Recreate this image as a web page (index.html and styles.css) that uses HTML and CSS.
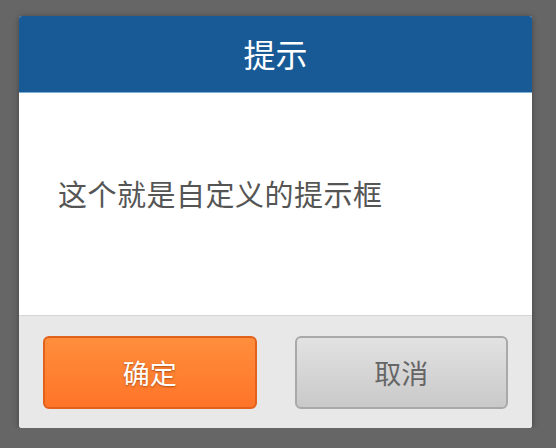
FILE: index.html
```html
<!DOCTYPE html>
<html lang="zh-CN">
<head>
  <meta charset="UTF-8">
  <meta name="viewport" content="width=device-width, initial-scale=1.0">
  <title>提示</title>
  <link rel="stylesheet" href="styles.css">
</head>
<body>
  <div class="dialog">
    <div class="dialog-header">提示</div>
    <div class="dialog-body">
      <p class="message">这个就是自定义的提示框</p>
    </div>
    <div class="dialog-footer">
      <button class="btn btn-ok">确定</button>
      <button class="btn btn-cancel">取消</button>
    </div>
  </div>
</body>
</html>
```

FILE: styles.css
```css
* {
  box-sizing: border-box;
  padding: 0;
  margin: 0;
}
body {
  background: #666;
  padding: 16px 24px 0 19px;
  font-family: "Noto Sans CJK SC", "Noto Sans", sans-serif;
}
.dialog {
  width: 513px;
  background: #fff;
  border-radius: 3px;
  overflow: hidden;
  box-shadow: 0 1px 6px rgba(0, 0, 0, 0.35);
}
.dialog-header {
  height: 77px;
  line-height: 74px;
  background: #175a96;
  border-bottom: 1px solid #7fb0d8;
  color: #fff;
  font-size: 32px;
  text-align: center;
}
.dialog-body {
  height: 222px;
  display: flex;
  align-items: center;
  padding-left: 39px;
  padding-bottom: 22px;
}
.message {
  font-size: 29px;
  color: #555;
  letter-spacing: 0.5px;
}
.dialog-footer {
  display: flex;
  gap: 38px;
  padding: 20px 24px 19px;
  background: #e8e8e8;
  border-top: 1px solid #d6d6d6;
}
.btn {
  flex: 1;
  height: 73px;
  border-radius: 6px;
  font-family: inherit;
  font-size: 27px;
}
.btn-ok {
  background: linear-gradient(#ff8e3c, #ff7428);
  border: 2px solid #e2621c;
  color: #fff;
  text-shadow: 0 1px 2px rgba(120, 50, 0, 0.6);
}
.btn-cancel {
  background: linear-gradient(#e2e2e2, #c9c9c9);
  border: 2px solid #a9a9a9;
  color: #666;
}
```
